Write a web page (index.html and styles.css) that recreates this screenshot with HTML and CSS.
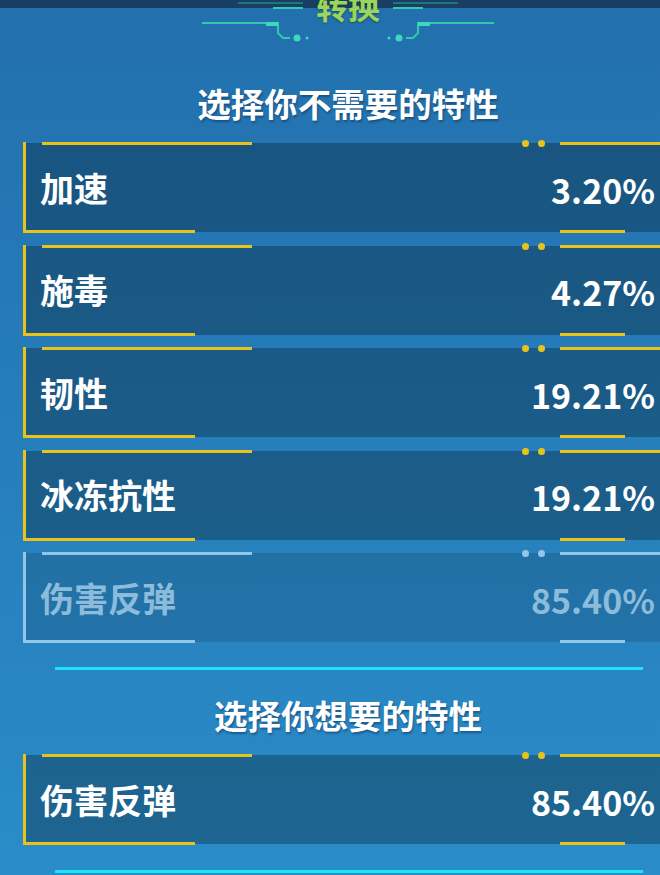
FILE: index.html
```html
<!DOCTYPE html>
<html lang="zh-CN">
<head>
    <meta charset="UTF-8">
    <meta name="viewport" content="width=device-width, initial-scale=1.0">
    <title>转换</title>
    <link rel="stylesheet" href="styles.css">
</head>
<body>

<div id="panel">
    <header class="panel-head">
        <svg class="ornament" width="650" height="48" viewBox="23 0 650 48">
            <!-- left circuit trace -->
            <path class="trace dim" d="M238 3 H303"/>
            <path class="trace" d="M273 8 H303"/>
            <path class="trace" d="M202 23 H278 V33 L283 38 H290"/>
            <rect class="pad" x="266" y="22" width="12" height="4"/>
            <circle class="node" cx="297" cy="38" r="3.5"/>
            <circle class="node" cx="307" cy="38" r="1.5"/>
            <!-- right circuit trace -->
            <path class="trace dim" d="M393 3 H458"/>
            <path class="trace" d="M393 8 H423"/>
            <path class="trace" d="M494 23 H418 V33 L413 38 H406"/>
            <rect class="pad" x="418" y="22" width="12" height="4"/>
            <circle class="node" cx="399" cy="38" r="3.5"/>
            <circle class="node" cx="389" cy="38" r="1.5"/>
        </svg>
        <h1 class="panel-title">转换</h1>
    </header>

    <h2 class="section-title first">选择你不需要的特性</h2>

    <ul class="trait-list">
        <li class="trait">
            <span class="edge-left"></span><span class="edge-top"></span><span class="edge-bottom"></span>
            <span class="dots"><i></i><i></i></span><span class="edge-top-r"></span><span class="edge-bottom-r"></span>
            <span class="trait-name">加速</span>
            <span class="trait-value">3.20%</span>
        </li>
        <li class="trait">
            <span class="edge-left"></span><span class="edge-top"></span><span class="edge-bottom"></span>
            <span class="dots"><i></i><i></i></span><span class="edge-top-r"></span><span class="edge-bottom-r"></span>
            <span class="trait-name">施毒</span>
            <span class="trait-value">4.27%</span>
        </li>
        <li class="trait">
            <span class="edge-left"></span><span class="edge-top"></span><span class="edge-bottom"></span>
            <span class="dots"><i></i><i></i></span><span class="edge-top-r"></span><span class="edge-bottom-r"></span>
            <span class="trait-name">韧性</span>
            <span class="trait-value">19.21%</span>
        </li>
        <li class="trait">
            <span class="edge-left"></span><span class="edge-top"></span><span class="edge-bottom"></span>
            <span class="dots"><i></i><i></i></span><span class="edge-top-r"></span><span class="edge-bottom-r"></span>
            <span class="trait-name">冰冻抗性</span>
            <span class="trait-value">19.21%</span>
        </li>
        <li class="trait disabled">
            <span class="edge-left"></span><span class="edge-top"></span><span class="edge-bottom"></span>
            <span class="dots"><i></i><i></i></span><span class="edge-top-r"></span><span class="edge-bottom-r"></span>
            <span class="trait-name">伤害反弹</span>
            <span class="trait-value">85.40%</span>
        </li>
    </ul>

    <div class="divider"></div>

    <h2 class="section-title">选择你想要的特性</h2>

    <ul class="trait-list">
        <li class="trait">
            <span class="edge-left"></span><span class="edge-top"></span><span class="edge-bottom"></span>
            <span class="dots"><i></i><i></i></span><span class="edge-top-r"></span><span class="edge-bottom-r"></span>
            <span class="trait-name">伤害反弹</span>
            <span class="trait-value">85.40%</span>
        </li>
    </ul>

    <div class="divider last"></div>
</div>

</body>
</html>
```

FILE: styles.css
```css
* {
  box-sizing: border-box;
  margin: 0;
  padding: 0;
}

html, body {
  width: 100%;
  height: 100%;
  overflow: hidden;
}

body {
  font-family: "Noto Sans CJK SC", "Noto Sans", sans-serif;
  color: white;
  background:
    linear-gradient(#183f63 0, #183f63 8px, transparent 8px),
    linear-gradient(#2270ad, #2a8cc8);
}

#panel {
  width: 650px;
  margin-left: 23px;
}

/* header with circuit ornament */
.panel-head {
  position: relative;
  height: 48px;
}

.ornament {
  display: block;
}

.trace {
  fill: none;
  stroke: #35c6ae;
  stroke-width: 2;
}

.trace.dim {
  stroke: #1f8a86;
  stroke-width: 1.5;
}

.pad, .node {
  fill: #3cd8bc;
}

.panel-title {
  position: absolute;
  top: -13px;
  left: 0;
  right: 0;
  text-align: center;
  font-size: 32px;
  line-height: 36px;
  font-weight: 700;
  color: #9ed45c;
  text-shadow: 0 1px 2px rgba(20, 60, 40, 0.6);
}

.section-title {
  text-align: center;
  font-size: 33.5px;
  line-height: 40px;
  font-weight: 700;
  margin: 25px 0 20px;
  text-shadow: 1px 2px 2px rgba(10, 40, 80, 0.45);
}

.section-title.first {
  margin-top: 35px;
}

/* trait rows */
.trait-list {
  list-style: none;
  display: flex;
  flex-direction: column;
  gap: 13.5px;
}

.trait {
  position: relative;
  height: 89px;
  display: flex;
  align-items: center;
  justify-content: space-between;
  padding: 0 18px 0 17px;
  background: rgba(0, 0, 0, 0.27);
  --edge: #e8c31c;
}

.trait span[class^="edge"], .dots {
  position: absolute;
}

.edge-left {
  left: 0;
  top: -1px;
  bottom: -1px;
  width: 3px;
  background: var(--edge);
}

.edge-top, .edge-top-r, .edge-bottom, .edge-bottom-r {
  height: 3px;
  background: var(--edge);
}

.edge-top {
  top: -1px;
  left: 19px;
  width: 210px;
}

.edge-bottom {
  bottom: -1px;
  left: 0;
  width: 172px;
}

.edge-top-r {
  top: -1px;
  left: 537px;
  right: 0;
}

.edge-bottom-r {
  bottom: -1px;
  left: 537px;
  width: 65px;
}

.dots {
  top: -3px;
  left: 499px;
  display: flex;
  gap: 9px;
}

.dots i {
  width: 7px;
  height: 7px;
  border-radius: 50%;
  background: var(--edge);
}

.trait-name {
  font-size: 34px;
  font-weight: 700;
  line-height: 40px;
}

.trait-value {
  font-size: 34px;
  font-weight: 700;
  line-height: 40px;
  margin-top: 4px;
}

.trait.disabled {
  background: rgba(0, 0, 0, 0.13);
  color: #8cbbdb;
  --edge: #93c6e6;
}

.divider {
  height: 3px;
  margin: 25px 30px 0 32px;
  background: #1de4f4;
}

.divider.last {
  margin-top: 26px;
}
```
